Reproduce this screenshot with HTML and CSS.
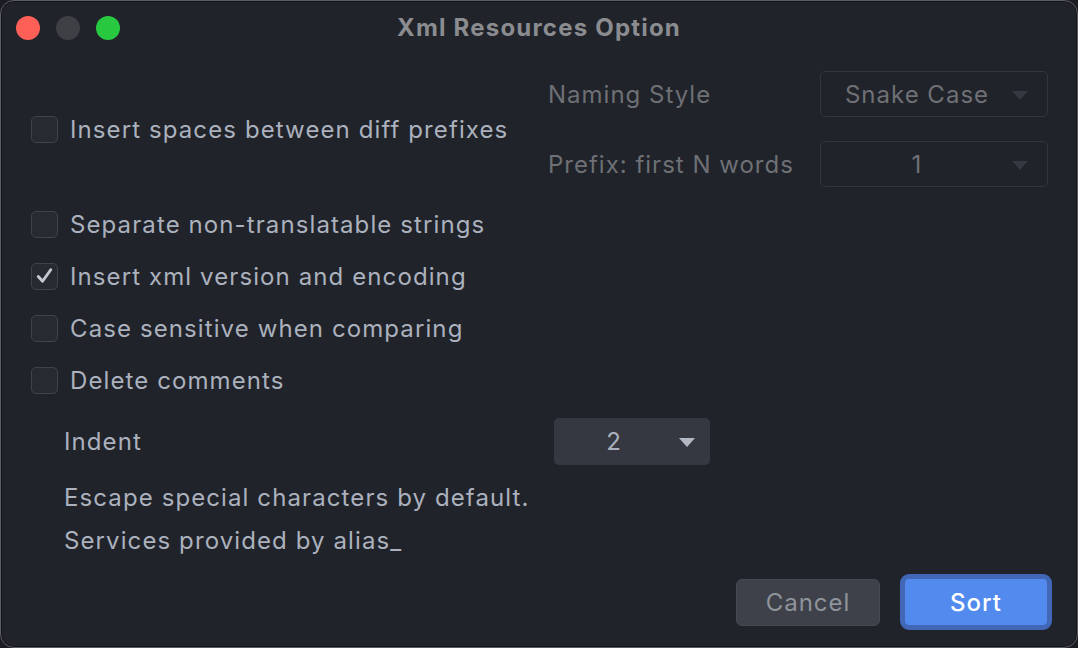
FILE: index.html
```html
<!DOCTYPE html>
<html lang="en">
<head>
<meta charset="utf-8">
<title>Xml Resources Option</title>
<link rel="stylesheet" href="styles.css">
</head>
<body>
<div class="window">
  <div class="titlebar">
    <div class="lights">
      <span class="light red"></span>
      <span class="light gray"></span>
      <span class="light green"></span>
    </div>
    <div class="title">Xml Resources Option</div>
    <div></div>
  </div>

  <div class="content">
    <div class="top">
      <label class="check">
        <span class="box"></span>
        <span class="label">Insert spaces between diff prefixes</span>
      </label>
      <div class="naming">
        <span class="dim-label">Naming Style</span>
        <div class="select disabled"><span class="val">Snake Case</span><span class="arrow"></span></div>
        <span class="dim-label">Prefix: first N words</span>
        <div class="select disabled"><span class="val">1</span><span class="arrow"></span></div>
      </div>
    </div>

    <div class="checks">
      <label class="check"><span class="box"></span><span class="label">Separate non-translatable strings</span></label>
      <label class="check"><span class="box on"><svg viewBox="0 0 26 26" width="26" height="26"><path d="M6.5 13.5 L11 18.5 L19.5 6.5" fill="none" stroke="#c3c8d1" stroke-width="3" stroke-linecap="round" stroke-linejoin="round"/></svg></span><span class="label">Insert xml version and encoding</span></label>
      <label class="check"><span class="box"></span><span class="label">Case sensitive when comparing</span></label>
      <label class="check"><span class="box"></span><span class="label">Delete comments</span></label>
    </div>

    <div class="indent">
      <span class="label">Indent</span>
      <div class="select solid"><span class="val">2</span><span class="arrow"></span></div>
    </div>

    <div class="notes">
      <p>Escape special characters by default.</p>
      <p>Services provided by alias_</p>
    </div>

    <div class="buttons">
      <button class="btn cancel">Cancel</button>
      <button class="btn primary">Sort</button>
    </div>
  </div>
</div>
</body>
</html>
```

FILE: styles.css
```css
* { box-sizing: border-box; }
html, body {
  margin: 0;
  padding: 0;
  background: #1b1d22;
}
body {
  width: 1078px;
  height: 648px;
  font-family: Inter, "Noto Sans", "Liberation Sans", sans-serif;
  color: #abb1bd;
}
.window {
  width: 1078px;
  height: 648px;
  background: #20232a;
  border: 1px solid #5b5e64;
  border-radius: 14px;
  box-shadow: inset 0 0 0 1px #141519;
  display: flex;
  flex-direction: column;
  overflow: hidden;
}
.titlebar {
  height: 54px;
  display: grid;
  grid-template-columns: 1fr auto 1fr;
  align-items: center;
  flex: none;
}
.lights {
  display: flex;
  gap: 16px;
  padding-left: 15px;
}
.light {
  width: 24px;
  height: 24px;
  border-radius: 50%;
  display: block;
}
.red { background: #fe5f57; }
.gray { background: #3e4046; }
.green { background: #28c840; }
.title {
  font-size: 24px;
  font-weight: 700;
  color: #8b8c90;
  letter-spacing: 1.2px;
  padding-bottom: 2px;
}
.content {
  flex: 1;
  display: flex;
  flex-direction: column;
  padding: 16px 29px 17px 29px;
}
.top {
  display: flex;
  align-items: center;
  justify-content: space-between;
}
.naming {
  display: grid;
  grid-template-columns: 272px 228px;
  row-gap: 24px;
  align-items: center;
}
.dim-label {
  font-size: 24px;
  letter-spacing: 1px;
  color: #6e7075;
}
.select {
  height: 46px;
  border-radius: 5px;
  position: relative;
  display: flex;
  align-items: center;
}
.select .val {
  font-size: 24px;
  letter-spacing: 1px;
}
.select .arrow {
  position: absolute;
  width: 0;
  height: 0;
  border-left: 8px solid transparent;
  border-right: 8px solid transparent;
  border-top: 9px solid #343841;
  top: 19px;
}
.select.disabled {
  border: 1.5px solid #32353c;
}
.select.disabled .val {
  color: #6e7075;
  width: 192px;
  text-align: center;
}
.select.disabled .arrow {
  right: 19px;
}
.check {
  display: flex;
  align-items: center;
  gap: 12px;
  height: 52px;
  padding-left: 1px;
}
.box {
  width: 27px;
  height: 27px;
  border: 1.5px solid #3f434b;
  background: #272a31;
  border-radius: 5px;
  display: flex;
  align-items: center;
  justify-content: center;
  flex: none;
}
.box svg { display: block; }
.label {
  font-size: 24px;
  color: #abb1bd;
  letter-spacing: 1.1px;
}
.checks {
  margin-top: 11px;
  display: flex;
  flex-direction: column;
}
.indent {
  margin-top: 12px;
  display: flex;
  align-items: center;
  padding-left: 34px;
}
.indent .label { width: 490px; }
.select.solid {
  width: 156px;
  height: 47px;
  background: #353841;
}
.select.solid .val {
  width: 120px;
  text-align: center;
  color: #abb1bd;
}
.select.solid .arrow {
  border-top-color: #b3b9c4;
  right: 15px;
  top: 20px;
}
.notes {
  padding-left: 34px;
  margin-top: 11px;
}
.notes p {
  margin: 0;
  font-size: 24px;
  line-height: 43px;
  letter-spacing: 1.1px;
}
.buttons {
  margin-top: auto;
  display: flex;
  justify-content: flex-end;
  align-items: center;
  gap: 20px;
  margin-right: -4px;
}
.btn {
  font-family: inherit;
  font-size: 24px;
  letter-spacing: 1px;
  border: none;
  border-radius: 6px;
  cursor: default;
}
.cancel {
  width: 144px;
  height: 47px;
  background: #3e4149;
  color: #8f939b;
  border: 1px solid #464951;
}
.primary {
  width: 152px;
  height: 56px;
  background: #528bed;
  color: #ffffff;
  border: 5px solid #4167b6;
  border-radius: 9px;
  font-weight: 500;
}
```
